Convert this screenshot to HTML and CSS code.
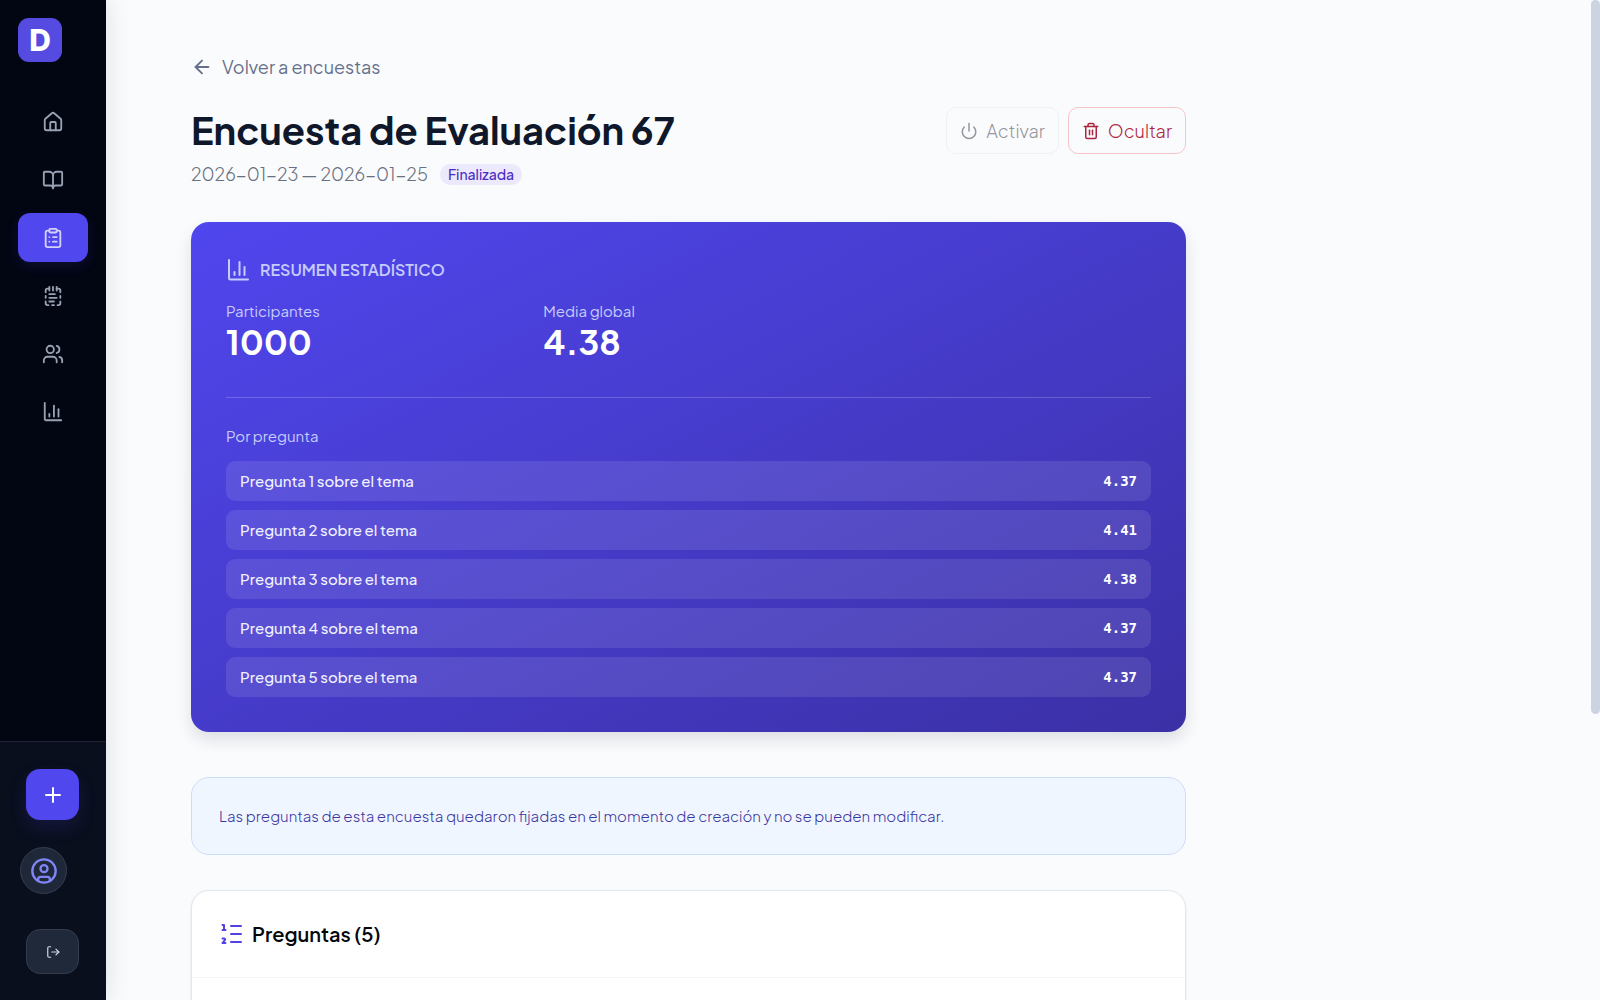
FILE: index.html
```html
<!DOCTYPE html>
<html lang="es">
<head>
<meta charset="utf-8">
<meta name="viewport" content="width=device-width, initial-scale=1">
<title>Encuesta de Evaluación 67</title>
<link rel="stylesheet" href="styles.css">
</head>
<body>
<div class="app">
  <aside class="sidebar">
    <div class="brand"><a class="logo" href="#">D</a></div>
    <nav class="nav" aria-label="Principal">
      <a class="nav-item" href="#" aria-label="Inicio"><svg class="icon" viewBox="0 0 24 24"><path d="M15 21v-8a1 1 0 0 0-1-1h-4a1 1 0 0 0-1 1v8"/><path d="M3 10a2 2 0 0 1 .709-1.528l7-5.999a2 2 0 0 1 2.582 0l7 5.999A2 2 0 0 1 21 10v9a2 2 0 0 1-2 2H5a2 2 0 0 1-2-2z"/></svg></a>
      <a class="nav-item" href="#" aria-label="Cursos"><svg class="icon" viewBox="0 0 24 24"><path d="M12 7v14"/><path d="M3 18a1 1 0 0 1-1-1V4a1 1 0 0 1 1-1h5a4 4 0 0 1 4 4 4 4 0 0 1 4-4h5a1 1 0 0 1 1 1v13a1 1 0 0 1-1 1h-6a3 3 0 0 0-3 3 3 3 0 0 0-3-3z"/></svg></a>
      <a class="nav-item active" href="#" aria-label="Encuestas" aria-current="page"><svg class="icon" viewBox="0 0 24 24"><rect width="8" height="4" x="8" y="2" rx="1"/><path d="M16 4h2a2 2 0 0 1 2 2v14a2 2 0 0 1-2 2H6a2 2 0 0 1-2-2V6a2 2 0 0 1 2-2h2"/><path d="M12 11h4"/><path d="M12 16h4"/><path d="M8 11h.01"/><path d="M8 16h.01"/></svg></a>
      <a class="nav-item" href="#" aria-label="Plantillas"><svg class="icon" viewBox="0 0 24 24"><path d="M8 2v4"/><path d="M12 2v4"/><path d="M16 2v4"/><path d="M16 4h2a2 2 0 0 1 2 2v2"/><path d="M20 12v2"/><path d="M20 18v2a2 2 0 0 1-2 2h-1"/><path d="M13 22h-2"/><path d="M7 22H6a2 2 0 0 1-2-2v-2"/><path d="M4 14v-2"/><path d="M4 8V6a2 2 0 0 1 2-2h2"/><path d="M8 10h6"/><path d="M8 14h8"/><path d="M8 18h5"/></svg></a>
      <a class="nav-item" href="#" aria-label="Usuarios"><svg class="icon" viewBox="0 0 24 24"><path d="M16 21v-2a4 4 0 0 0-4-4H6a4 4 0 0 0-4 4v2"/><circle cx="9" cy="7" r="4"/><path d="M22 21v-2a4 4 0 0 0-3-3.87"/><path d="M16 3.13a4 4 0 0 1 0 7.75"/></svg></a>
      <a class="nav-item" href="#" aria-label="Estadísticas"><svg class="icon" viewBox="0 0 24 24"><path d="M3 2v18a1 1 0 0 0 1 1h17"/><path d="M18 17V9"/><path d="M13 17V5"/><path d="M8 17v-3"/></svg></a>
    </nav>
    <div class="sidebar-foot">
      <button class="add" type="button" aria-label="Crear"><svg class="icon icon-lg" viewBox="0 0 24 24"><path d="M5 12h14"/><path d="M12 5v14"/></svg></button>
      <a class="avatar" href="#" aria-label="Perfil"><svg class="icon icon-xl" viewBox="0 0 24 24"><circle cx="12" cy="12" r="10"/><circle cx="12" cy="10" r="3"/><path d="M7 20.662V19a2 2 0 0 1 2-2h6a2 2 0 0 1 2 2v1.662"/></svg></a>
      <button class="logout" type="button" aria-label="Cerrar sesión"><svg class="icon icon-sm" viewBox="0 0 24 24"><path d="M8 21H5a2 2 0 0 1-2-2V5a2 2 0 0 1 2-2h3"/><path d="m17 17 5-5-5-5"/><path d="M22 12H10"/></svg></button>
    </div>
  </aside>

  <main class="main">
    <div class="content">
      <a class="back" href="#"><svg class="icon" viewBox="0 0 24 24"><path d="m12 19-7-7 7-7"/><path d="M19 12H5"/></svg>Volver a encuestas</a>

      <header class="head">
        <div>
          <h1 class="title">Encuesta de Evaluación 67</h1>
          <p class="meta"><span>2026-01-23 — 2026-01-25</span><span class="badge">Finalizada</span></p>
        </div>
        <div class="actions">
          <button class="btn" type="button" disabled><svg class="icon icon-md" viewBox="0 0 24 24"><path d="M12 2v10"/><path d="M18.4 6.6a9 9 0 1 1-12.77.04"/></svg>Activar</button>
          <button class="btn btn-danger" type="button"><svg class="icon icon-md" viewBox="0 0 24 24"><path d="M3 6h18"/><path d="M19 6v14a2 2 0 0 1-2 2H7a2 2 0 0 1-2-2V6"/><path d="M8 6V4a2 2 0 0 1 2-2h4a2 2 0 0 1 2 2v2"/><path d="M10 11v6"/><path d="M14 11v6"/></svg>Ocultar</button>
        </div>
      </header>

      <section class="summary">
        <h2 class="summary-title"><svg class="icon icon-lg" viewBox="0 0 24 24"><path d="M3 2v18a1.500 1.500 0 0 0 1.500 1.500H22"/><path d="M18.500 17V9"/><path d="M13.500 17V4"/><path d="M8.500 17v-3"/></svg>RESUMEN ESTADÍSTICO</h2>
        <dl class="stats">
          <div><dt>Participantes</dt><dd>1000</dd></div>
          <div><dt>Media global</dt><dd>4.38</dd></div>
        </dl>
        <div class="by-question">
          <h3 class="by-title">Por pregunta</h3>
          <ul class="rows">
            <li class="row"><span>Pregunta 1 sobre el tema</span><span class="score">4.37</span></li>
            <li class="row"><span>Pregunta 2 sobre el tema</span><span class="score">4.41</span></li>
            <li class="row"><span>Pregunta 3 sobre el tema</span><span class="score">4.38</span></li>
            <li class="row"><span>Pregunta 4 sobre el tema</span><span class="score">4.37</span></li>
            <li class="row"><span>Pregunta 5 sobre el tema</span><span class="score">4.37</span></li>
          </ul>
        </div>
      </section>

      <p class="notice">Las preguntas de esta encuesta quedaron fijadas en el momento de creación y no se pueden modificar.</p>

      <section class="questions">
        <h2 class="questions-title"><svg class="icon icon-lg list-icon" viewBox="0 0 24 24"><path d="M11 4h10"/><path d="M11 12h10"/><path d="M11 20h10"/><path d="M2.500 3H4v5"/><path d="M2.500 8h3"/><path d="M2.500 16.500h1.800a.9.9 0 0 1 .5 1.600L2.500 21h3"/></svg>Preguntas (5)</h2>
        <div class="questions-body"></div>
      </section>
    </div>
  </main>
  <div class="scroll-thumb" aria-hidden="true"></div>
</div>
</body>
</html>
```
FILE: styles.css
```css
* { box-sizing: border-box; }

body {
  margin: 0;
  font-family: "Plus Jakarta Sans", Inter, "Open Sans", sans-serif;
  font-size: 15px;
  line-height: 22px;
  color: #0f172a;
  background: #fafbfd;
}

h1, h2, h3, p, dl, dd, ul { margin: 0; padding: 0; }
ul { list-style: none; }
a { color: inherit; text-decoration: none; }
button { font: inherit; cursor: pointer; }

.app { position: relative; display: flex; height: 100vh; }

.icon {
  width: 22px;
  height: 22px;
  flex: none;
  fill: none;
  stroke: currentColor;
  stroke-width: 2;
  stroke-linecap: round;
  stroke-linejoin: round;
}
.icon-sm { width: 14px; height: 14px; }
.icon-md { width: 18px; height: 18px; }
.icon-lg { width: 24px; height: 24px; }
.icon-xl { width: 28px; height: 28px; }

/* Sidebar */
.sidebar {
  display: flex;
  flex-direction: column;
  flex: none;
  width: 106px;
  color: #99a1b3;
  background: #020613;
  box-shadow: 0 0 24px rgba(15, 23, 42, .12);
  z-index: 1;
}
.brand { padding: 18px 18px 35px; }
.logo {
  display: grid;
  place-items: center;
  width: 44px;
  height: 44px;
  border-radius: 11px;
  color: #fff;
  background: #554be0;
  font-family: Inter, sans-serif;
  font-size: 30px;
  font-weight: 800;
}
.nav {
  display: flex;
  flex-direction: column;
  flex: 1;
  gap: 9px;
  padding: 0 18px;
}
.nav-item {
  display: grid;
  place-items: center;
  height: 49px;
  border-radius: 12px;
}
.nav-item.active {
  color: #d3d2fc;
  background: #5147ee;
  box-shadow: 0 4px 12px rgba(79, 70, 229, .15);
}
.sidebar-foot {
  display: flex;
  flex-direction: column;
  align-items: flex-start;
  padding: 27px 26px 26px;
  border-top: 1px solid #1e2433;
  background: #0a0f1e;
}
.add, .logout {
  display: grid;
  place-items: center;
  width: 53px;
  padding: 0;
  border-radius: 14px;
}
.add {
  height: 51px;
  border: 0;
  color: #fff;
  background: #5147ee;
  box-shadow: 0 8px 18px rgba(79, 70, 229, .15);
}
.avatar {
  display: grid;
  place-items: center;
  width: 47px;
  height: 47px;
  margin: 27px -6px 35px;
  border: 1px solid #363d50;
  border-radius: 50%;
  color: #7f85f5;
  background: #1f2838;
}
.logout {
  height: 45px;
  border: 1px solid #343c4b;
  color: #d3dae6;
  background: #20293a;
}

/* Page */
.main {
  flex: 1;
  min-width: 0;
  overflow-y: auto;
  scrollbar-width: none;
}
.scroll-thumb {
  position: absolute;
  top: 0;
  right: 0;
  width: 9px;
  height: 71.4%;
  border-radius: 5px;
  background: #ccd4e1;
}
.content {
  max-width: 1165px;
  padding: 53px 85px 88px;
}
.back {
  display: inline-flex;
  align-items: center;
  gap: 9px;
  font-size: 18px;
  line-height: 28px;
  font-weight: 400;
  color: #64708a;
}
.head {
  display: flex;
  justify-content: space-between;
  align-items: flex-start;
  gap: 24px;
  margin-top: 24px;
}
.title {
  font-size: 38px;
  line-height: 46px;
  font-weight: 700;
}
.meta {
  display: flex;
  align-items: center;
  gap: 12px;
  margin-top: 7px;
  font-size: 18px;
  line-height: 28px;
  font-weight: 300;
  color: #697080;
}
.badge {
  padding: 0 8px;
  border-radius: 11px;
  color: #4a2bc2;
  background: #ece9fd;
  font-size: 14px;
  line-height: 21px;
  font-weight: 500;
}
.actions { display: flex; gap: 9px; }
.btn {
  display: flex;
  align-items: center;
  gap: 8px;
  height: 47px;
  padding: 0 13px;
  border: 1px solid #f0f1f4;
  border-radius: 10px;
  background: #fafbfc;
  color: #93979e;
  font-size: 18px;
  font-weight: 300;
}
.btn-danger {
  border-color: #f8c3ca;
  color: #ad2440;
}

.summary {
  margin-top: 34px;
  padding: 35px;
  border-radius: 18px;
  color: #fff;
  background: linear-gradient(to bottom right, #5046ee, #3b30a5);
  box-shadow: 0 8px 16px rgba(15, 23, 42, .12);
}
.summary-title {
  display: flex;
  align-items: center;
  gap: 10px;
  font-size: 16px;
  line-height: 25px;
  font-weight: 600;
  color: #c6ccfc;
}
.stats {
  display: grid;
  grid-template-columns: repeat(3, 1fr);
  gap: 27px;
  margin-top: 18px;
}
.stats dt, .by-title {
  font-size: 15px;
  line-height: 22px;
  font-weight: 400;
  color: #c6ccfc;
}
.stats dd {
  font-size: 34px;
  line-height: 40px;
  font-weight: 700;
}
.by-question {
  margin-top: 35px;
  padding-top: 27px;
  border-top: 1px solid rgba(255, 255, 255, .2);
}
.rows {
  display: grid;
  gap: 9px;
  margin-top: 14px;
}
.row {
  display: flex;
  justify-content: space-between;
  align-items: center;
  height: 40px;
  padding: 0 14px;
  border-radius: 9px;
  background: rgba(255, 255, 255, .1);
  color: #f0f1ff;
  font-weight: 500;
}
.score {
  font-family: "DejaVu Sans Mono", monospace;
  font-size: 14px;
  font-weight: 700;
  color: #fff;
}

.notice {
  margin-top: 45px;
  padding: 27px;
  border: 1px solid #cbdcfb;
  border-radius: 18px;
  color: #3a35a0;
  background: #f0f6ff;
  font-weight: 300;
}

.questions {
  margin-top: 35px;
  border: 1px solid #e2e6ee;
  border-radius: 18px;
  background: #fff;
  box-shadow: 0 1px 3px rgba(15, 23, 42, .08);
}
.questions-title {
  display: flex;
  align-items: center;
  gap: 8px;
  padding: 28px;
  border-bottom: 1px solid #f4f5f8;
  font-size: 20px;
  line-height: 30px;
  font-weight: 600;
  color: #05070d;
}
.list-icon { color: #5043e6; }
.questions-body { min-height: 334px; }
```
